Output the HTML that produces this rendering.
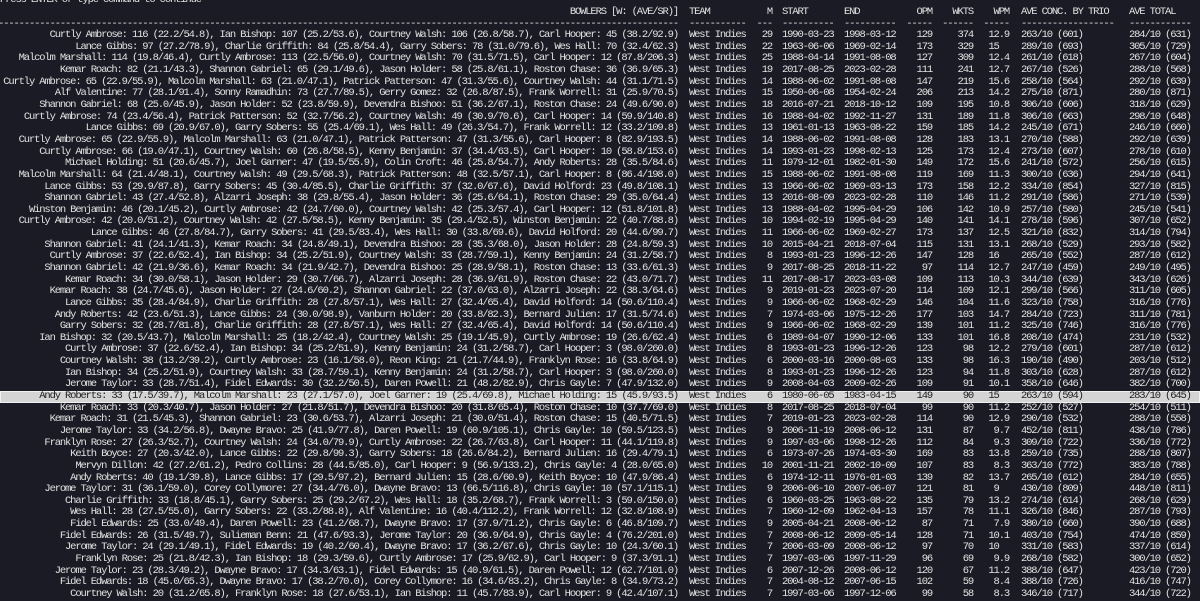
<!DOCTYPE html>
<html><head><meta charset="utf-8"><style>
html,body{margin:0;padding:0;width:1200px;height:600px;overflow:hidden;background:#1b1b25;}
#w{position:absolute;left:0;top:-4.75px;width:1200px;font-family:"Liberation Mono","DejaVu Sans Mono",monospace;font-size:10.5px;letter-spacing:-1.15px;color:#e2e2e2;}
.r{position:relative;height:11.65px;line-height:11.65px;white-space:pre;}
.r span{position:absolute;top:0;white-space:pre;}
.b{right:522px}.t{left:689px}.m{right:428px}.s{left:782px}.e{left:844px}.o{right:268px}.w{right:227px}.p{right:191px}.c{left:1021px}.a{left:1129px}
.h{background:#d4d4d4;color:#1e1e1e;box-shadow:0 0 0 1px #f0f0f0 inset;}
</style></head><body><div id="w">
<div class="r"><span style="left:0">Press ENTER or type command to continue</span></div>
<div class="r"><span class="b">BOWLERS [W: (AVE/SR)]</span><span class="t">TEAM</span><span class="m">M</span><span class="s">START</span><span class="e">END</span><span class="o">OPM</span><span class="w">WKTS</span><span class="p">WPM</span><span class="c">AVE CONC. BY TRIO</span><span class="a">AVE TOTAL</span></div>
<div class="r"><span class="b">------------------------------------------------------------------------------------------------------------------------------------</span><span class="t">-----------</span><span class="m">---</span><span class="s">----------</span><span class="e">----------</span><span class="o">-----</span><span class="w">------</span><span class="p">-----</span><span class="c">------------------</span><span class="a">------------</span></div>
<div class="r"><span class="b">Curtly Ambrose: 116 (22.2/54.8), Ian Bishop: 107 (25.2/53.6), Courtney Walsh: 106 (26.8/58.7), Carl Hooper: 45 (38.2/92.9)</span><span class="t">West Indies</span><span class="m">29</span><span class="s">1990-03-23</span><span class="e">1998-03-12</span><span class="o">129</span><span class="w">374</span><span class="p">12.9</span><span class="c">263/10 (601)</span><span class="a">284/10 (631)</span></div>
<div class="r"><span class="b">Lance Gibbs: 97 (27.2/78.9), Charlie Griffith: 84 (25.8/54.4), Garry Sobers: 78 (31.0/79.6), Wes Hall: 70 (32.4/62.3)</span><span class="t">West Indies</span><span class="m">22</span><span class="s">1963-06-06</span><span class="e">1969-02-14</span><span class="o">173</span><span class="w">329</span><span class="p">15  </span><span class="c">289/10 (693)</span><span class="a">305/10 (729)</span></div>
<div class="r"><span class="b">Malcolm Marshall: 114 (19.8/46.4), Curtly Ambrose: 113 (22.5/56.0), Courtney Walsh: 70 (31.5/71.5), Carl Hooper: 12 (87.8/206.3)</span><span class="t">West Indies</span><span class="m">25</span><span class="s">1988-04-14</span><span class="e">1991-08-08</span><span class="o">127</span><span class="w">309</span><span class="p">12.4</span><span class="c">261/10 (618)</span><span class="a">267/10 (604)</span></div>
<div class="r"><span class="b">Kemar Roach: 82 (21.1/43.3), Shannon Gabriel: 65 (29.1/49.6), Jason Holder: 58 (25.8/61.1), Roston Chase: 36 (36.9/65.3)</span><span class="t">West Indies</span><span class="m">19</span><span class="s">2017-08-25</span><span class="e">2023-02-28</span><span class="o">111</span><span class="w">241</span><span class="p">12.7</span><span class="c">267/10 (526)</span><span class="a">288/10 (568)</span></div>
<div class="r"><span class="b">Curtly Ambrose: 65 (22.9/55.9), Malcolm Marshall: 63 (21.0/47.1), Patrick Patterson: 47 (31.3/55.6), Courtney Walsh: 44 (31.1/71.5)</span><span class="t">West Indies</span><span class="m">14</span><span class="s">1988-06-02</span><span class="e">1991-08-08</span><span class="o">147</span><span class="w">219</span><span class="p">15.6</span><span class="c">258/10 (564)</span><span class="a">292/10 (639)</span></div>
<div class="r"><span class="b">Alf Valentine: 77 (28.1/91.4), Sonny Ramadhin: 73 (27.7/89.5), Gerry Gomez: 32 (26.8/87.5), Frank Worrell: 31 (25.9/70.5)</span><span class="t">West Indies</span><span class="m">15</span><span class="s">1950-06-08</span><span class="e">1954-02-24</span><span class="o">206</span><span class="w">213</span><span class="p">14.2</span><span class="c">275/10 (871)</span><span class="a">280/10 (871)</span></div>
<div class="r"><span class="b">Shannon Gabriel: 68 (25.0/45.9), Jason Holder: 52 (23.8/59.9), Devendra Bishoo: 51 (36.2/67.1), Roston Chase: 24 (49.6/90.0)</span><span class="t">West Indies</span><span class="m">18</span><span class="s">2016-07-21</span><span class="e">2018-10-12</span><span class="o">109</span><span class="w">195</span><span class="p">10.8</span><span class="c">306/10 (606)</span><span class="a">318/10 (629)</span></div>
<div class="r"><span class="b">Curtly Ambrose: 74 (23.4/56.4), Patrick Patterson: 52 (32.7/56.2), Courtney Walsh: 49 (30.9/70.6), Carl Hooper: 14 (59.9/140.8)</span><span class="t">West Indies</span><span class="m">16</span><span class="s">1988-04-02</span><span class="e">1992-11-27</span><span class="o">131</span><span class="w">189</span><span class="p">11.8</span><span class="c">306/10 (663)</span><span class="a">298/10 (648)</span></div>
<div class="r"><span class="b">Lance Gibbs: 69 (20.9/67.0), Garry Sobers: 55 (25.4/69.1), Wes Hall: 49 (26.3/54.7), Frank Worrell: 12 (33.2/109.8)</span><span class="t">West Indies</span><span class="m">13</span><span class="s">1961-01-13</span><span class="e">1963-08-22</span><span class="o">159</span><span class="w">185</span><span class="p">14.2</span><span class="c">245/10 (671)</span><span class="a">246/10 (660)</span></div>
<div class="r"><span class="b">Curtly Ambrose: 65 (22.9/55.9), Malcolm Marshall: 63 (21.0/47.1), Patrick Patterson: 47 (31.3/55.6), Carl Hooper: 8 (82.9/193.5)</span><span class="t">West Indies</span><span class="m">14</span><span class="s">1988-06-02</span><span class="e">1991-08-08</span><span class="o">128</span><span class="w">183</span><span class="p">13.1</span><span class="c">270/10 (588)</span><span class="a">292/10 (639)</span></div>
<div class="r"><span class="b">Curtly Ambrose: 66 (19.0/47.1), Courtney Walsh: 60 (26.8/58.5), Kenny Benjamin: 37 (34.4/63.5), Carl Hooper: 10 (58.8/153.6)</span><span class="t">West Indies</span><span class="m">14</span><span class="s">1993-01-23</span><span class="e">1998-02-13</span><span class="o">125</span><span class="w">173</span><span class="p">12.4</span><span class="c">273/10 (607)</span><span class="a">278/10 (610)</span></div>
<div class="r"><span class="b">Michael Holding: 51 (20.6/45.7), Joel Garner: 47 (19.5/55.9), Colin Croft: 46 (25.8/54.7), Andy Roberts: 28 (35.5/84.6)</span><span class="t">West Indies</span><span class="m">11</span><span class="s">1979-12-01</span><span class="e">1982-01-30</span><span class="o">149</span><span class="w">172</span><span class="p">15.6</span><span class="c">241/10 (572)</span><span class="a">256/10 (615)</span></div>
<div class="r"><span class="b">Malcolm Marshall: 64 (21.4/48.1), Courtney Walsh: 49 (29.5/68.3), Patrick Patterson: 48 (32.5/57.1), Carl Hooper: 8 (86.4/198.0)</span><span class="t">West Indies</span><span class="m">15</span><span class="s">1988-06-02</span><span class="e">1991-08-08</span><span class="o">119</span><span class="w">169</span><span class="p">11.3</span><span class="c">300/10 (636)</span><span class="a">294/10 (641)</span></div>
<div class="r"><span class="b">Lance Gibbs: 53 (29.9/87.8), Garry Sobers: 45 (30.4/85.5), Charlie Griffith: 37 (32.0/67.6), David Holford: 23 (49.8/108.1)</span><span class="t">West Indies</span><span class="m">13</span><span class="s">1966-06-02</span><span class="e">1969-03-13</span><span class="o">173</span><span class="w">158</span><span class="p">12.2</span><span class="c">334/10 (854)</span><span class="a">327/10 (815)</span></div>
<div class="r"><span class="b">Shannon Gabriel: 43 (27.4/52.8), Alzarri Joseph: 38 (29.8/55.4), Jason Holder: 36 (25.6/64.1), Roston Chase: 29 (35.0/64.4)</span><span class="t">West Indies</span><span class="m">13</span><span class="s">2016-08-09</span><span class="e">2023-02-28</span><span class="o">110</span><span class="w">146</span><span class="p">11.2</span><span class="c">291/10 (586)</span><span class="a">271/10 (539)</span></div>
<div class="r"><span class="b">Winston Benjamin: 46 (20.1/45.2), Curtly Ambrose: 42 (24.7/60.0), Courtney Walsh: 42 (25.3/57.4), Carl Hooper: 12 (51.8/101.8)</span><span class="t">West Indies</span><span class="m">13</span><span class="s">1988-04-02</span><span class="e">1995-04-29</span><span class="o">106</span><span class="w">142</span><span class="p">10.9</span><span class="c">257/10 (580)</span><span class="a">245/10 (541)</span></div>
<div class="r"><span class="b">Curtly Ambrose: 42 (20.0/51.2), Courtney Walsh: 42 (27.5/58.5), Kenny Benjamin: 35 (29.4/52.5), Winston Benjamin: 22 (40.7/88.8)</span><span class="t">West Indies</span><span class="m">10</span><span class="s">1994-02-19</span><span class="e">1995-04-29</span><span class="o">140</span><span class="w">141</span><span class="p">14.1</span><span class="c">278/10 (596)</span><span class="a">307/10 (652)</span></div>
<div class="r"><span class="b">Lance Gibbs: 46 (27.8/84.7), Garry Sobers: 41 (29.5/83.4), Wes Hall: 30 (33.8/69.6), David Holford: 20 (44.6/99.7)</span><span class="t">West Indies</span><span class="m">11</span><span class="s">1966-06-02</span><span class="e">1969-02-27</span><span class="o">173</span><span class="w">137</span><span class="p">12.5</span><span class="c">321/10 (832)</span><span class="a">314/10 (794)</span></div>
<div class="r"><span class="b">Shannon Gabriel: 41 (24.1/41.3), Kemar Roach: 34 (24.8/49.1), Devendra Bishoo: 28 (35.3/68.0), Jason Holder: 28 (24.8/59.3)</span><span class="t">West Indies</span><span class="m">10</span><span class="s">2015-04-21</span><span class="e">2018-07-04</span><span class="o">115</span><span class="w">131</span><span class="p">13.1</span><span class="c">268/10 (529)</span><span class="a">293/10 (582)</span></div>
<div class="r"><span class="b">Curtly Ambrose: 37 (22.6/52.4), Ian Bishop: 34 (25.2/51.9), Courtney Walsh: 33 (28.7/59.1), Kenny Benjamin: 24 (31.2/58.7)</span><span class="t">West Indies</span><span class="m">8</span><span class="s">1993-01-23</span><span class="e">1996-12-26</span><span class="o">147</span><span class="w">128</span><span class="p">16  </span><span class="c">265/10 (552)</span><span class="a">287/10 (612)</span></div>
<div class="r"><span class="b">Shannon Gabriel: 42 (21.9/36.6), Kemar Roach: 34 (21.9/42.7), Devendra Bishoo: 25 (28.9/58.1), Roston Chase: 13 (33.6/61.3)</span><span class="t">West Indies</span><span class="m">9</span><span class="s">2017-08-25</span><span class="e">2018-11-22</span><span class="o">97</span><span class="w">114</span><span class="p">12.7</span><span class="c">247/10 (459)</span><span class="a">249/10 (495)</span></div>
<div class="r"><span class="b">Kemar Roach: 34 (30.0/58.1), Jason Holder: 29 (30.7/66.7), Alzarri Joseph: 28 (36.9/61.9), Roston Chase: 22 (43.0/71.7)</span><span class="t">West Indies</span><span class="m">11</span><span class="s">2017-08-17</span><span class="e">2023-03-08</span><span class="o">109</span><span class="w">113</span><span class="p">10.3</span><span class="c">344/10 (639)</span><span class="a">343/10 (626)</span></div>
<div class="r"><span class="b">Kemar Roach: 38 (24.7/45.6), Jason Holder: 27 (24.6/60.2), Shannon Gabriel: 22 (37.0/63.0), Alzarri Joseph: 22 (38.3/64.6)</span><span class="t">West Indies</span><span class="m">9</span><span class="s">2019-01-23</span><span class="e">2023-07-20</span><span class="o">114</span><span class="w">109</span><span class="p">12.1</span><span class="c">299/10 (566)</span><span class="a">311/10 (605)</span></div>
<div class="r"><span class="b">Lance Gibbs: 35 (28.4/84.9), Charlie Griffith: 28 (27.8/57.1), Wes Hall: 27 (32.4/65.4), David Holford: 14 (50.6/110.4)</span><span class="t">West Indies</span><span class="m">9</span><span class="s">1966-06-02</span><span class="e">1968-02-29</span><span class="o">146</span><span class="w">104</span><span class="p">11.6</span><span class="c">323/10 (758)</span><span class="a">316/10 (776)</span></div>
<div class="r"><span class="b">Andy Roberts: 42 (23.6/51.3), Lance Gibbs: 24 (30.0/98.9), Vanburn Holder: 20 (33.8/82.3), Bernard Julien: 17 (31.5/74.6)</span><span class="t">West Indies</span><span class="m">7</span><span class="s">1974-03-06</span><span class="e">1975-12-26</span><span class="o">177</span><span class="w">103</span><span class="p">14.7</span><span class="c">284/10 (723)</span><span class="a">311/10 (781)</span></div>
<div class="r"><span class="b">Garry Sobers: 32 (28.7/81.8), Charlie Griffith: 28 (27.8/57.1), Wes Hall: 27 (32.4/65.4), David Holford: 14 (50.6/110.4)</span><span class="t">West Indies</span><span class="m">9</span><span class="s">1966-06-02</span><span class="e">1968-02-29</span><span class="o">139</span><span class="w">101</span><span class="p">11.2</span><span class="c">325/10 (746)</span><span class="a">316/10 (776)</span></div>
<div class="r"><span class="b">Ian Bishop: 32 (20.5/43.7), Malcolm Marshall: 25 (18.2/42.4), Courtney Walsh: 25 (19.1/45.9), Curtly Ambrose: 19 (26.6/62.4)</span><span class="t">West Indies</span><span class="m">6</span><span class="s">1989-04-07</span><span class="e">1990-12-06</span><span class="o">133</span><span class="w">101</span><span class="p">16.8</span><span class="c">208/10 (474)</span><span class="a">231/10 (532)</span></div>
<div class="r"><span class="b">Curtly Ambrose: 37 (22.6/52.4), Ian Bishop: 34 (25.2/51.9), Kenny Benjamin: 24 (31.2/58.7), Carl Hooper: 3 (98.0/260.0)</span><span class="t">West Indies</span><span class="m">8</span><span class="s">1993-01-23</span><span class="e">1996-12-26</span><span class="o">123</span><span class="w">98</span><span class="p">12.2</span><span class="c">279/10 (601)</span><span class="a">287/10 (612)</span></div>
<div class="r"><span class="b">Courtney Walsh: 38 (13.2/39.2), Curtly Ambrose: 23 (16.1/58.0), Reon King: 21 (21.7/44.9), Franklyn Rose: 16 (33.8/64.9)</span><span class="t">West Indies</span><span class="m">6</span><span class="s">2000-03-16</span><span class="e">2000-08-03</span><span class="o">133</span><span class="w">98</span><span class="p">16.3</span><span class="c">190/10 (490)</span><span class="a">203/10 (512)</span></div>
<div class="r"><span class="b">Ian Bishop: 34 (25.2/51.9), Courtney Walsh: 33 (28.7/59.1), Kenny Benjamin: 24 (31.2/58.7), Carl Hooper: 3 (98.0/260.0)</span><span class="t">West Indies</span><span class="m">8</span><span class="s">1993-01-23</span><span class="e">1996-12-26</span><span class="o">123</span><span class="w">94</span><span class="p">11.8</span><span class="c">303/10 (628)</span><span class="a">287/10 (612)</span></div>
<div class="r"><span class="b">Jerome Taylor: 33 (28.7/51.4), Fidel Edwards: 30 (32.2/50.5), Daren Powell: 21 (48.2/82.9), Chris Gayle: 7 (47.9/132.0)</span><span class="t">West Indies</span><span class="m">9</span><span class="s">2008-04-03</span><span class="e">2009-02-26</span><span class="o">109</span><span class="w">91</span><span class="p">10.1</span><span class="c">358/10 (646)</span><span class="a">382/10 (700)</span></div>
<div class="r h"><span class="b">Andy Roberts: 33 (17.5/39.7), Malcolm Marshall: 23 (27.1/57.0), Joel Garner: 19 (25.4/69.8), Michael Holding: 15 (45.9/93.5)</span><span class="t">West Indies</span><span class="m">6</span><span class="s">1980-06-05</span><span class="e">1983-04-15</span><span class="o">149</span><span class="w">90</span><span class="p">15  </span><span class="c">263/10 (594)</span><span class="a">283/10 (645)</span></div>
<div class="r"><span class="b">Kemar Roach: 33 (20.3/40.7), Jason Holder: 27 (21.8/51.7), Devendra Bishoo: 20 (31.8/65.4), Roston Chase: 10 (37.7/69.0)</span><span class="t">West Indies</span><span class="m">8</span><span class="s">2017-08-25</span><span class="e">2018-07-04</span><span class="o">99</span><span class="w">90</span><span class="p">11.2</span><span class="c">252/10 (527)</span><span class="a">254/10 (511)</span></div>
<div class="r"><span class="b">Kemar Roach: 31 (21.5/45.3), Shannon Gabriel: 23 (30.6/53.7), Alzarri Joseph: 21 (30.0/51.4), Roston Chase: 15 (40.5/71.5)</span><span class="t">West Indies</span><span class="m">7</span><span class="s">2019-01-23</span><span class="e">2023-02-28</span><span class="o">114</span><span class="w">90</span><span class="p">12.9</span><span class="c">290/10 (532)</span><span class="a">288/10 (558)</span></div>
<div class="r"><span class="b">Jerome Taylor: 33 (34.2/56.8), Dwayne Bravo: 25 (41.9/77.8), Daren Powell: 19 (60.9/105.1), Chris Gayle: 10 (59.5/123.5)</span><span class="t">West Indies</span><span class="m">9</span><span class="s">2006-11-19</span><span class="e">2008-06-12</span><span class="o">131</span><span class="w">87</span><span class="p">9.7</span><span class="c">452/10 (811)</span><span class="a">438/10 (786)</span></div>
<div class="r"><span class="b">Franklyn Rose: 27 (26.3/52.7), Courtney Walsh: 24 (34.0/79.9), Curtly Ambrose: 22 (26.7/63.8), Carl Hooper: 11 (44.1/119.8)</span><span class="t">West Indies</span><span class="m">9</span><span class="s">1997-03-06</span><span class="e">1998-12-26</span><span class="o">112</span><span class="w">84</span><span class="p">9.3</span><span class="c">309/10 (722)</span><span class="a">336/10 (772)</span></div>
<div class="r"><span class="b">Keith Boyce: 27 (20.3/42.0), Lance Gibbs: 22 (29.8/99.3), Garry Sobers: 18 (26.6/84.2), Bernard Julien: 16 (29.4/79.1)</span><span class="t">West Indies</span><span class="m">6</span><span class="s">1973-07-26</span><span class="e">1974-03-30</span><span class="o">169</span><span class="w">83</span><span class="p">13.8</span><span class="c">259/10 (735)</span><span class="a">288/10 (807)</span></div>
<div class="r"><span class="b">Mervyn Dillon: 42 (27.2/61.2), Pedro Collins: 28 (44.5/85.0), Carl Hooper: 9 (56.9/133.2), Chris Gayle: 4 (28.0/65.0)</span><span class="t">West Indies</span><span class="m">10</span><span class="s">2001-11-21</span><span class="e">2002-10-09</span><span class="o">107</span><span class="w">83</span><span class="p">8.3</span><span class="c">363/10 (772)</span><span class="a">383/10 (788)</span></div>
<div class="r"><span class="b">Andy Roberts: 40 (19.1/39.8), Lance Gibbs: 17 (29.5/97.2), Bernard Julien: 15 (28.6/60.9), Keith Boyce: 10 (47.9/86.4)</span><span class="t">West Indies</span><span class="m">6</span><span class="s">1974-12-11</span><span class="e">1976-01-03</span><span class="o">139</span><span class="w">82</span><span class="p">13.7</span><span class="c">265/10 (612)</span><span class="a">284/10 (655)</span></div>
<div class="r"><span class="b">Jerome Taylor: 31 (36.1/59.0), Corey Collymore: 27 (34.4/76.0), Dwayne Bravo: 13 (66.5/116.8), Chris Gayle: 10 (57.1/115.1)</span><span class="t">West Indies</span><span class="m">9</span><span class="s">2006-06-10</span><span class="e">2007-06-07</span><span class="o">121</span><span class="w">81</span><span class="p">9  </span><span class="c">430/10 (809)</span><span class="a">448/10 (811)</span></div>
<div class="r"><span class="b">Charlie Griffith: 33 (18.8/45.1), Garry Sobers: 25 (29.2/67.2), Wes Hall: 18 (35.2/68.7), Frank Worrell: 3 (59.0/150.0)</span><span class="t">West Indies</span><span class="m">6</span><span class="s">1960-03-25</span><span class="e">1963-08-22</span><span class="o">135</span><span class="w">79</span><span class="p">13.2</span><span class="c">274/10 (614)</span><span class="a">268/10 (629)</span></div>
<div class="r"><span class="b">Wes Hall: 28 (27.5/55.0), Garry Sobers: 22 (33.2/88.8), Alf Valentine: 16 (40.4/112.2), Frank Worrell: 12 (32.8/108.9)</span><span class="t">West Indies</span><span class="m">7</span><span class="s">1960-12-09</span><span class="e">1962-04-13</span><span class="o">157</span><span class="w">78</span><span class="p">11.1</span><span class="c">326/10 (846)</span><span class="a">287/10 (793)</span></div>
<div class="r"><span class="b">Fidel Edwards: 25 (33.0/49.4), Daren Powell: 23 (41.2/68.7), Dwayne Bravo: 17 (37.9/71.2), Chris Gayle: 6 (46.8/109.7)</span><span class="t">West Indies</span><span class="m">9</span><span class="s">2005-04-21</span><span class="e">2008-06-12</span><span class="o">87</span><span class="w">71</span><span class="p">7.9</span><span class="c">380/10 (660)</span><span class="a">390/10 (688)</span></div>
<div class="r"><span class="b">Fidel Edwards: 26 (31.5/49.7), Sulieman Benn: 21 (47.6/93.3), Jerome Taylor: 20 (36.9/64.9), Chris Gayle: 4 (76.2/201.0)</span><span class="t">West Indies</span><span class="m">7</span><span class="s">2008-06-12</span><span class="e">2009-05-14</span><span class="o">128</span><span class="w">71</span><span class="p">10.1</span><span class="c">403/10 (754)</span><span class="a">474/10 (859)</span></div>
<div class="r"><span class="b">Jerome Taylor: 24 (29.1/49.1), Fidel Edwards: 19 (40.2/60.4), Dwayne Bravo: 17 (36.2/67.6), Chris Gayle: 10 (24.3/60.1)</span><span class="t">West Indies</span><span class="m">7</span><span class="s">2006-03-09</span><span class="e">2008-06-12</span><span class="o">97</span><span class="w">70</span><span class="p">10  </span><span class="c">331/10 (583)</span><span class="a">337/10 (614)</span></div>
<div class="r"><span class="b">Franklyn Rose: 25 (21.8/42.3), Ian Bishop: 18 (29.3/59.6), Curtly Ambrose: 17 (25.9/62.9), Carl Hooper: 9 (37.3/91.1)</span><span class="t">West Indies</span><span class="m">7</span><span class="s">1997-03-06</span><span class="e">1997-11-29</span><span class="o">96</span><span class="w">69</span><span class="p">9.9</span><span class="c">268/10 (582)</span><span class="a">300/10 (652)</span></div>
<div class="r"><span class="b">Jerome Taylor: 23 (28.3/49.2), Dwayne Bravo: 17 (34.3/63.1), Fidel Edwards: 15 (40.9/61.5), Daren Powell: 12 (62.7/101.0)</span><span class="t">West Indies</span><span class="m">6</span><span class="s">2007-12-26</span><span class="e">2008-06-12</span><span class="o">120</span><span class="w">67</span><span class="p">11.2</span><span class="c">388/10 (647)</span><span class="a">423/10 (720)</span></div>
<div class="r"><span class="b">Fidel Edwards: 18 (45.0/65.3), Dwayne Bravo: 17 (38.2/70.0), Corey Collymore: 16 (34.6/83.2), Chris Gayle: 8 (34.9/73.2)</span><span class="t">West Indies</span><span class="m">7</span><span class="s">2004-08-12</span><span class="e">2007-06-15</span><span class="o">102</span><span class="w">59</span><span class="p">8.4</span><span class="c">388/10 (726)</span><span class="a">416/10 (747)</span></div>
<div class="r"><span class="b">Courtney Walsh: 20 (31.2/65.8), Franklyn Rose: 18 (27.6/53.1), Ian Bishop: 11 (45.7/83.9), Carl Hooper: 9 (42.4/107.1)</span><span class="t">West Indies</span><span class="m">7</span><span class="s">1997-03-06</span><span class="e">1997-12-06</span><span class="o">99</span><span class="w">58</span><span class="p">8.3</span><span class="c">346/10 (717)</span><span class="a">344/10 (722)</span></div>
</div></body></html>
